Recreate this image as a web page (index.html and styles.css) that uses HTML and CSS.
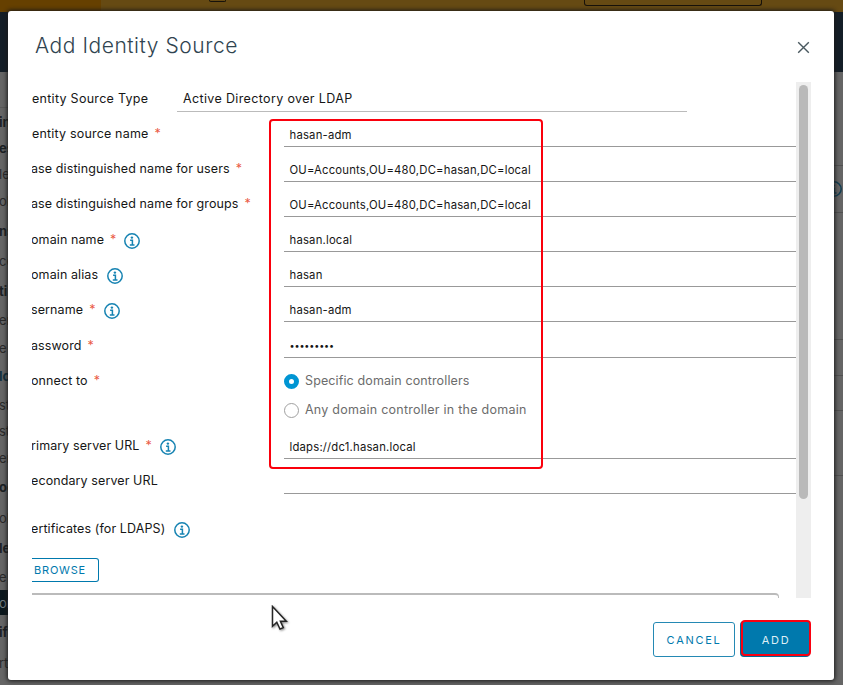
FILE: index.html
```
<!DOCTYPE html>
<html lang="en">
<head>
<meta charset="utf-8">
<title>Add Identity Source</title>
<link rel="stylesheet" href="styles.css">
</head>
<body>
<svg class="defs" width="0" height="0" aria-hidden="true">
  <symbol id="info" viewBox="0 0 16 16">
    <circle cx="8" cy="8" r="7.2" fill="none" stroke="currentColor" stroke-width="1.5"/>
    <circle cx="7.9" cy="4.6" r="1.2" fill="currentColor"/>
    <path d="M6.1 7.2H8.4V11.8M5.8 11.9H10.5" fill="none" stroke="currentColor" stroke-width="1.5"/>
  </symbol>
</svg>
<div class="app">
  <div class="banner"><div class="banner-left"></div><div class="banner-icon"></div><div class="banner-button"></div></div>
  <div class="topbar"></div>
  <div class="workspace">
    <nav class="sidebar">
      <div class="nav-title"></div>
      <div class="b h27">in</div><div class="b h25">es</div><div class="h27">le</div><div class="h28">ob</div>
      <div class="b h31">ns</div><div class="h29">ce</div><div class="b h31">ti</div><div class="h28">er</div><div class="h27">e</div>
      <div class="b h30 blue">lo</div><div class="h27">st</div><div class="h26">st</div><div class="h27">er</div>
      <div class="b h32">oc</div><div class="h29">olo</div><div class="b h31">le</div><div class="h27">e</div>
      <div class="active h25">on</div><div class="b h34">ifi</div><div class="h27">rt</div>
    </nav>
    <div class="panel"><div class="p1"></div><div class="p2"><svg class="info"><use href="#info"/></svg></div><div class="p3"></div><div class="p4"></div><div class="p5"></div><div class="p6"></div></div>
  </div>
</div>

<section class="dialog">
  <header class="dialog-head">
    <h1>Add Identity Source</h1>
    <svg class="close" viewBox="0 0 14 14"><path d="M1.3 1.3L12.7 12.7M12.7 1.3L1.3 12.7"/></svg>
  </header>
  <div class="dialog-body">
    <form class="form">
      <div class="row type"><label>entity Source Type</label><div class="field">Active Directory over LDAP</div></div>
      <div class="row"><label>entity source name<i>*</i></label><div class="field">hasan-adm</div></div>
      <div class="row"><label class="cut">ase distinguished name for users<i>*</i></label><div class="field">OU=Accounts,OU=480,DC=hasan,DC=local</div></div>
      <div class="row"><label class="cut">ase distinguished name for groups<i>*</i></label><div class="field">OU=Accounts,OU=480,DC=hasan,DC=local</div></div>
      <div class="row low"><label class="cut">omain name<i>*</i><svg class="info"><use href="#info"/></svg></label><div class="field">hasan.local</div></div>
      <div class="row low"><label class="cut">omain alias<svg class="info"><use href="#info"/></svg></label><div class="field">hasan</div></div>
      <div class="row low"><label class="cut">sername<i>*</i><svg class="info"><use href="#info"/></svg></label><div class="field">hasan-adm</div></div>
      <div class="row tall low"><label class="cut">assword<i>*</i></label><div class="field password">•••••••••</div></div>
      <div class="row connect low"><label class="cut">onnect to<i>*</i></label>
        <div class="choices">
          <div class="choice"><span class="radio on"></span>Specific domain controllers</div>
          <div class="choice wide"><span class="radio"></span>Any domain controller in the domain</div>
        </div>
      </div>
      <div class="row"><label class="cut">rimary server URL<i>*</i><svg class="info"><use href="#info"/></svg></label><div class="field">ldaps://dc1.hasan.local</div></div>
      <div class="row"><label class="cut">econdary server URL</label><div class="field"></div></div>
      <div class="certs"><label class="cut">ertificates (for LDAPS)<svg class="info"><use href="#info"/></svg></label></div>
      <div class="browse">BROWSE</div>
      <div class="certlist"></div>
    </form>
    <div class="track"><div class="thumb"></div></div>
  </div>
  <footer><div class="btn">CANCEL</div><div class="btn primary">ADD</div></footer>
</section>
<div class="highlight"></div>
<svg class="cursor" viewBox="0 0 17 26"><path d="M1.5 1.5V21.2L5.8 17.3L9 24L12.3 22.6L9.4 16.2H15.3Z"/></svg>
</body>
</html>
```
FILE: styles.css
```
* { box-sizing: border-box; }
body { margin: 0; width: 843px; height: 685px; overflow: hidden; position: relative; font-family: "Inter", "Open Sans", sans-serif; font-size: 12.5px; color: #161616; background: #656565; }
.defs { position: absolute; }
.app { height: 685px; display: flex; flex-direction: column; }
.banner { height: 12px; background: #664a13; display: flex; align-items: flex-start; }
.banner-left { width: 101px; height: 12px; background: #664000; }
.banner-icon { width: 17px; height: 2px; margin-left: 108px; border: solid #17120a; border-width: 0 1px 1px; border-radius: 0 0 3px 3px; }
.banner-button { width: 178px; height: 6px; margin-left: 358px; border: 1px solid #17120a; border-top: 0; border-radius: 0 0 3px 3px; }
.topbar { height: 60px; background: #141e27; }
.workspace { flex: 1; display: flex; justify-content: space-between; background: #656565; }
.sidebar { width: 30px; overflow: hidden; color: #292929; font-size: 13px; white-space: nowrap; text-indent: -1px; }
.sidebar div { display: flex; align-items: center; }
.sidebar .nav-title { height: 36px; border-bottom: 1px solid #585858; }
.b { font-weight: 700; color: #1b2023; }
.blue { color: #12303d !important; }
.sidebar .active { background: #0b171d; color: #707a80; }
.h25 { height: 25px; } .h26 { height: 26px; } .h27 { height: 27px; } .h28 { height: 28px; } .h29 { height: 29px; }
.h30 { height: 30px; } .h31 { height: 31px; } .h32 { height: 32px; } .h34 { height: 34px; }
.panel { width: 16px; }
.panel > div { border-bottom: 1px solid #515151; }
.p1 { height: 94px; } .p2 { height: 47px; padding-top: 15px; } .p3 { height: 127px; } .p4 { height: 36px; } .p5 { height: 35px; } .p6 { height: 65px; }
.p2 { display: flex; justify-content: flex-end; }
.p2 .info { color: #123e52; margin: 0 1px 0 0; }

.dialog { position: absolute; left: 8px; top: 11px; width: 826px; height: 669px; border-radius: 3px; background: #fff; box-shadow: 0 0 4px 1px #1a1a1a; padding: 0 24px; }
.dialog-head { height: 71px; display: flex; justify-content: space-between; align-items: flex-start; padding: 21px 0 0 3px; }
h1 { margin: 0; font-size: 21px; line-height: 28px; font-weight: 300; color: #304450; letter-spacing: .55px; }
.close { width: 13px; height: 13px; margin: 9px 0 0; fill: none; stroke: #49585f; stroke-width: 1.5; }
.dialog-body { height: 516px; display: flex; width: 779px; }
.form { width: 764px; height: 516px; overflow: hidden; }
.track { width: 15px; background: #eee; padding: 3px 3px 0; }
.thumb { width: 9px; height: 414px; border-radius: 5px; background: #b9b9b9; }
.row { display: flex; height: 35px; }
.row.tall { height: 36px; }
label { width: 252px; display: flex; align-items: center; padding-top: 8px; white-space: nowrap; letter-spacing: .18px; }
label.cut { margin-left: -1px; width: 253px; letter-spacing: .1px; }
.low label { padding-top: 10px; }
label i { font-style: normal; color: #ea5b45; margin-left: 6px; }
.info { width: 16px; height: 16px; color: #1683b2; margin: 3px 0 0 9px; flex: none; }
.low .info { margin-top: 2px; }
label i + .info { margin-left: 8px; }
.field { flex: 1; border-bottom: 1px solid #999; padding: 11px 0 0 5.5px; display: flex; align-items: center; font-size: 11.3px; letter-spacing: .2px; white-space: nowrap; }
.type { height: 30px; }
.type label { width: 145px; padding-top: 3px; letter-spacing: .28px; }
.type .field { flex: none; width: 510px; font-size: 12.5px; padding: 4px 0 0 6px; border-color: #bbb; letter-spacing: .36px; }
.field.password { font-size: 9px; letter-spacing: -.12px; padding-top: 12px; }
.connect { height: 66px; }
.connect label { height: 34px; }
.choices { padding-top: 9px; color: #6c6c6c; font-size: 12.5px; }
.choice { height: 29px; display: flex; align-items: center; padding-bottom: 2px; letter-spacing: .12px; }
.choice.wide { letter-spacing: .25px; }
.radio { width: 15px; height: 15px; border: 1px solid #a0a0a0; border-radius: 50%; margin: 2px 6px 0 0; }
.radio.on { border: 5px solid #0095d3; background: #fff; }
.certs { height: 64px; }
.certs label { height: 68px; padding-top: 0; }
.browse { width: 67px; height: 24px; border: 1px solid #0079ad; border-left: 0; border-radius: 0 3px 3px 0; padding-left: 2px; line-height: 22px; font-size: 11px; color: #0079ad; letter-spacing: .8px; }
.certlist { width: 747px; height: 20px; margin-top: 11px; border: solid #bbb; border-width: 2px 1px 0 0; border-radius: 0 4px 0 0; }
footer { display: flex; justify-content: flex-end; gap: 6px; padding-top: 24px; margin-right: -1px; }
.btn { width: 82px; height: 35px; border: 1px solid #2489b4; border-radius: 3px; color: #0079ad; font-size: 11px; line-height: 35px; letter-spacing: 1.7px; text-align: center; }
.primary { width: 70px; background: #0079ad; color: #dfeff6; border: 2px solid #fa0010; border-radius: 4px; line-height: 36px; height: 36px; margin-top: -2px; box-shadow: -1px 1px 0 #006b99; }
.highlight { position: absolute; left: 269px; top: 119px; width: 274px; height: 350px; border: 2px solid #fa000c; border-radius: 4px; pointer-events: none; }
.cursor { position: absolute; left: 271px; top: 605px; width: 17px; height: 26px; fill: #fff; stroke: #252525; stroke-width: 1.5; filter: drop-shadow(1px 1px 1px #888); }
```
